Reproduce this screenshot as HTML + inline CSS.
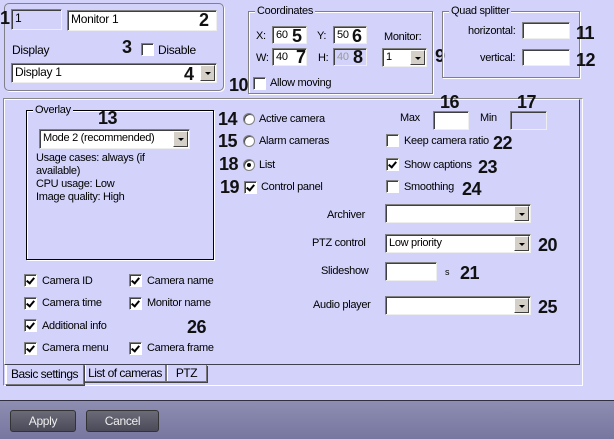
<!DOCTYPE html>
<html><head><meta charset="utf-8"><style>
*{margin:0;padding:0;box-sizing:border-box}
body{width:614px;height:439px;background:#d2d2fa;font-family:"Liberation Sans",Arial,sans-serif;font-size:11px;letter-spacing:-0.3px;color:#000;position:relative;overflow:hidden}
.a{position:absolute;white-space:nowrap}
.n{position:absolute;font-weight:bold;font-size:18px;line-height:18px;color:#111;letter-spacing:-0.5px}
.in{position:absolute;background:#fff;border-top:1px solid #808080;border-left:1px solid #808080;border-right:1px solid #eee;border-bottom:1px solid #eee;box-shadow:inset 1px 1px 0 #404040;padding:2px 0 0 3px;font-size:11px;line-height:13px;white-space:nowrap}
.sel .ar{position:absolute;right:1px;top:1px;width:15px;bottom:1px;background:#d4d0c8;border-right:1px solid #404040;border-bottom:1px solid #404040;border-top:1px solid #fff;border-left:1px solid #fff}
.sel .ar:after{content:"";position:absolute;left:4px;top:6px;border-left:3px solid transparent;border-right:3px solid transparent;border-top:3px solid #000}
.cb{position:absolute;width:13px;height:13px;background:#fff;border-top:1px solid #808080;border-left:1px solid #808080;border-right:1px solid #fff;border-bottom:1px solid #fff;box-shadow:inset 1px 1px 0 #404040}
.cb.c:after{content:"";position:absolute;left:3px;top:1px;width:3px;height:6px;border-right:2px solid #000;border-bottom:2px solid #000;transform:rotate(40deg)}
.rd{position:absolute;width:12px;height:12px;border-radius:50%;background:#fff;border:1px solid #808080;box-shadow:inset 1px 1px 0 #404040}
.rd.c:after{content:"";position:absolute;left:3px;top:3px;width:4px;height:4px;border-radius:50%;background:#000}
.grp{position:absolute;border:1px solid #808080;box-shadow:1px 1px 0 #fff,inset 1px 1px 0 #fff}
.lg{position:absolute;background:#d2d2fa;padding:0 2px;top:-7px;left:6px;line-height:12px;white-space:nowrap}
.btn{position:absolute;top:410px;height:22px;border-radius:3px;background:linear-gradient(#6a6a78,#4a4a58);border:1px solid #333;color:#eee;text-align:center;line-height:20px;font-size:12px}
.tab{position:absolute;top:365px;height:17px;border:1px solid #777;border-top:none;box-shadow:1px 1px 0 #444,inset 1px 0 0 #fff;padding:2px 0 0 0;text-align:center;font-size:12px;line-height:13px;white-space:nowrap;letter-spacing:-0.5px}
</style></head><body>
<div class="a" style="left:4px;top:3px;width:220px;height:88px;border:1px solid #808088;border-radius:5px;box-shadow:1px 1px 0 #fff"></div>
<div class="n" style="left:0;top:9px">1</div>
<div class="in" style="left:11px;top:9px;width:51px;height:21px;background:#d2d2fa;font-size:12px">1</div>
<div class="in" style="left:67px;top:10px;width:150px;height:21px;font-size:12px">Monitor 1</div>
<div class="n" style="left:199px;top:11px">2</div>
<div class="a" style="left:12px;top:43px;font-size:12px">Display</div>
<div class="n" style="left:122px;top:38px">3</div>
<div class="cb" style="left:141px;top:43px"></div>
<div class="a" style="left:158px;top:43px;font-size:12px">Disable</div>
<div class="in sel" style="left:11px;top:63px;width:206px;height:20px;font-size:12px">Display 1<div class="ar"></div></div>
<div class="n" style="left:184px;top:65px">4</div>
<div class="n" style="left:229px;top:76px">10</div>
<div class="cb" style="left:253px;top:77px"></div>
<div class="a" style="left:270px;top:77px">Allow moving</div>
<div class="grp" style="left:248px;top:11px;width:185px;height:83px"><div class="lg">Coordinates</div></div>
<div class="a" style="left:256px;top:30px">X:</div>
<div class="in" style="left:272px;top:26px;width:35px;height:18px">60</div>
<div class="n" style="left:292px;top:27px">5</div>
<div class="a" style="left:317px;top:30px">Y:</div>
<div class="in" style="left:333px;top:26px;width:34px;height:18px">50</div>
<div class="n" style="left:352px;top:27px">6</div>
<div class="a" style="left:384px;top:31px">Monitor:</div>
<div class="a" style="left:256px;top:52px">W:</div>
<div class="in" style="left:272px;top:48px;width:35px;height:18px">40</div>
<div class="n" style="left:296px;top:48px">7</div>
<div class="a" style="left:318px;top:52px">H:</div>
<div class="in" style="left:333px;top:48px;width:34px;height:18px;background:#d2d2fa;color:#999">40</div>
<div class="n" style="left:353px;top:48px">8</div>
<div class="in sel" style="left:382px;top:48px;width:45px;height:19px">1<div class="ar"></div></div>
<div class="n" style="left:435px;top:47px">9</div>
<div class="grp" style="left:442px;top:11px;width:138px;height:67px"><div class="lg">Quad splitter</div></div>
<div class="a" style="left:468px;top:25px">horizontal:</div>
<div class="in" style="left:522px;top:22px;width:48px;height:17px"></div>
<div class="n" style="left:576px;top:24px">11</div>
<div class="a" style="left:480px;top:52px">vertical:</div>
<div class="in" style="left:522px;top:49px;width:48px;height:17px"></div>
<div class="n" style="left:576px;top:51px">12</div>
<div class="a" style="left:3px;top:98px;width:580px;height:288px;border-left:1px solid #888;border-top:1px solid #888;border-right:1px solid #fff;border-bottom:1px solid #fff"></div>
<div class="a" style="left:4px;top:99px;width:576px;height:266px;border-top:1px solid #fff;border-left:1px solid #fff;border-right:1px solid #404050;border-bottom:1px solid #404050"></div>
<div class="grp" style="left:26px;top:110px;width:188px;height:150px;border-color:#000"><div class="lg">Overlay</div></div>
<div class="n" style="left:98px;top:109px">13</div>
<div class="in sel" style="left:39px;top:129px;width:151px;height:20px">Mode 2 (recommended)<div class="ar"></div></div>
<div class="a" style="left:36px;top:152px;line-height:13px">Usage cases: always (if<br>available)<br>CPU usage: Low<br>Image quality: High</div>
<div class="n" style="left:218px;top:110px">14</div>
<div class="rd" style="left:243px;top:113px"></div>
<div class="a" style="left:259px;top:113px">Active camera</div>
<div class="n" style="left:218px;top:132px">15</div>
<div class="rd" style="left:243px;top:135px"></div>
<div class="a" style="left:259px;top:135px">Alarm cameras</div>
<div class="n" style="left:219px;top:155px">18</div>
<div class="rd c" style="left:243px;top:159px"></div>
<div class="a" style="left:259px;top:159px">List</div>
<div class="n" style="left:220px;top:178px">19</div>
<div class="cb c" style="left:244px;top:181px"></div>
<div class="a" style="left:261px;top:181px">Control panel</div>
<div class="a" style="left:400px;top:112px">Max</div>
<div class="n" style="left:440px;top:93px">16</div>
<div class="in" style="left:433px;top:111px;width:36px;height:19px"></div>
<div class="a" style="left:480px;top:112px">Min</div>
<div class="n" style="left:517px;top:93px">17</div>
<div class="in" style="left:510px;top:111px;width:37px;height:19px;background:#d2d2fa"></div>
<div class="cb" style="left:386px;top:134px"></div>
<div class="a" style="left:404px;top:135px">Keep camera ratio</div>
<div class="n" style="left:493px;top:134px">22</div>
<div class="cb c" style="left:386px;top:158px"></div>
<div class="a" style="left:404px;top:159px">Show captions</div>
<div class="n" style="left:478px;top:158px">23</div>
<div class="cb" style="left:386px;top:180px"></div>
<div class="a" style="left:404px;top:181px">Smoothing</div>
<div class="n" style="left:462px;top:180px">24</div>
<div class="a" style="left:327px;top:209px">Archiver</div>
<div class="in sel" style="left:385px;top:204px;width:146px;height:19px"><div class="ar"></div></div>
<div class="a" style="left:312px;top:237px">PTZ control</div>
<div class="in sel" style="left:385px;top:234px;width:146px;height:19px">Low priority<div class="ar"></div></div>
<div class="n" style="left:538px;top:236px">20</div>
<div class="a" style="left:321px;top:265px">Slideshow</div>
<div class="in" style="left:385px;top:262px;width:52px;height:19px"></div>
<div class="a" style="left:445px;top:267px;font-size:9px">s</div>
<div class="n" style="left:460px;top:264px">21</div>
<div class="a" style="left:313px;top:299px">Audio player</div>
<div class="in sel" style="left:385px;top:296px;width:146px;height:19px"><div class="ar"></div></div>
<div class="n" style="left:538px;top:298px">25</div>
<div class="cb c" style="left:24px;top:274px"></div><div class="a" style="left:42px;top:275px">Camera ID</div>
<div class="cb c" style="left:129px;top:274px"></div><div class="a" style="left:147px;top:275px">Camera name</div>
<div class="cb c" style="left:24px;top:297px"></div><div class="a" style="left:42px;top:297px">Camera time</div>
<div class="cb c" style="left:129px;top:297px"></div><div class="a" style="left:147px;top:297px">Monitor name</div>
<div class="cb c" style="left:24px;top:319px"></div><div class="a" style="left:42px;top:320px">Additional info</div>
<div class="n" style="left:187px;top:318px">26</div>
<div class="cb c" style="left:24px;top:342px"></div><div class="a" style="left:42px;top:342px">Camera menu</div>
<div class="cb c" style="left:129px;top:342px"></div><div class="a" style="left:147px;top:342px">Camera frame</div>
<div class="tab" style="left:5px;width:79px;height:20px;padding-top:3px;border-left:1px solid #fff;background:#d2d2fa;z-index:2">Basic settings</div>
<div class="tab" style="left:84px;width:82px">List of cameras</div>
<div class="tab" style="left:166px;width:41px">PTZ</div>
<div class="a" style="left:0;top:400px;width:614px;height:39px;background:linear-gradient(#8e8eb2,#7676a0);border-top:1px solid #303040"></div>
<div class="btn" style="left:10px;width:66px">Apply</div>
<div class="btn" style="left:86px;width:73px">Cancel</div>
</body></html>
